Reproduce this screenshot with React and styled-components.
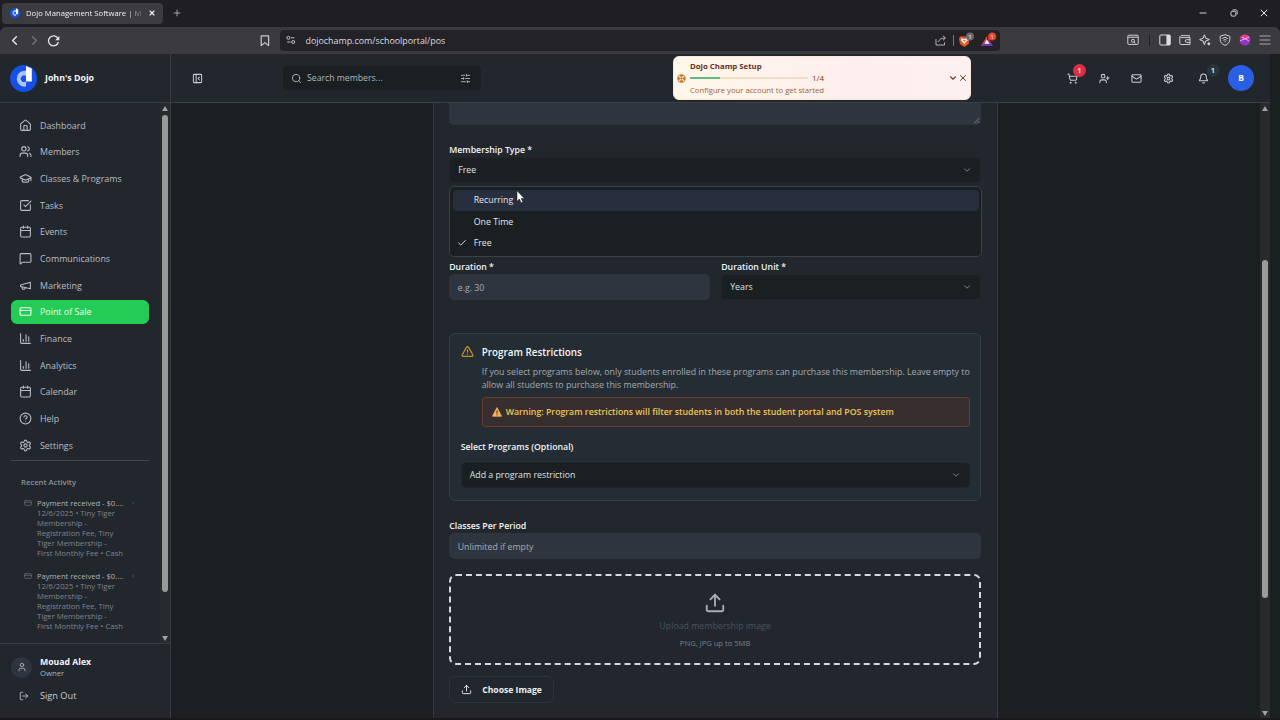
import React from "react";
import styled, { createGlobalStyle, css } from "styled-components";
import {
  Bell,
  Calendar,
  ChartColumn,
  Check,
  ChevronDown,
  ChevronLeft,
  ChevronRight,
  CircleQuestionMark,
  CreditCard,
  GraduationCap,
  House,
  LogOut,
  Mail,
  MessageSquare,
  PanelLeftClose,
  Plus,
  Search,
  Settings,
  ShoppingCart,
  SlidersHorizontal,
  SquareCheckBig,
  TriangleAlert,
  Upload,
  User,
  UserPlus,
  Users,
  X,
} from "lucide-react";

function MegaphoneIcon({ size, strokeWidth }) {
  return (
    <svg
      width={size}
      height={size}
      viewBox="0 0 24 24"
      fill="none"
      stroke="currentColor"
      strokeWidth={strokeWidth}
      strokeLinecap="round"
      strokeLinejoin="round"
    >
      <path d="m3 11 18-5v12L3 14v-3z" />
      <path d="M11.6 16.8a3 3 0 1 1-5.8-1.6" />
    </svg>
  );
}

const navItems = [
  { label: "Dashboard", icon: House },
  { label: "Members", icon: Users },
  { label: "Classes & Programs", icon: GraduationCap },
  { label: "Tasks", icon: SquareCheckBig },
  { label: "Events", icon: Calendar },
  { label: "Communications", icon: MessageSquare },
  { label: "Marketing", icon: MegaphoneIcon },
  { label: "Point of Sale", icon: CreditCard, active: true },
  { label: "Finance", icon: ChartColumn },
  { label: "Analytics", icon: ChartColumn },
  { label: "Calendar", icon: Calendar },
  { label: "Help", icon: CircleQuestionMark },
  { label: "Settings", icon: Settings },
];

const activities = [
  {
    id: 1,
    title: "Payment received - $0....",
    lines: ["12/6/2025 • Tiny Tiger", "Membership -", "Registration Fee, Tiny", "Tiger Membership -", "First Monthly Fee • Cash"],
  },
  {
    id: 2,
    title: "Payment received - $0....",
    lines: ["12/6/2025 • Tiny Tiger", "Membership -", "Registration Fee, Tiny", "Tiger Membership -", "First Monthly Fee • Cash"],
  },
];

const membershipTypes = ["Recurring", "One Time", "Free"];

function DojoLogo({ size }) {
  return (
    <svg width={size} height={size} viewBox="0 0 27 27">
      <circle cx="13.5" cy="13.5" r="13.5" fill="#1551e6" />
      <path d="M16 5.8a8 8 0 1 0 0 15.8v-5.4a3.2 3.2 0 1 1 0-5z" fill="#a9c3fb" />
      <path d="M16 1l5.8 2.6V16.6H16z" fill="#fff" />
    </svg>
  );
}

function BrowserChrome() {
  return (
    <>
      <TabStrip>
        <Tab>
          <DojoLogo size={10} />
          <TabTitle>Dojo Management Software | M</TabTitle>
          <X size={8} strokeWidth={3.4} />
        </Tab>
        <Plus size={10} strokeWidth={2} color="#b9b8bc" />
        <WindowButtons>
          <svg width="8" height="8" viewBox="0 0 8 8">
            <path d="M.5 4h7" stroke="#d0cfd2" />
          </svg>
          <svg width="8" height="8" viewBox="0 0 8 8" fill="none" stroke="#d0cfd2">
            <rect x="1" y="2.3" width="4.8" height="4.8" rx="1" />
            <path d="M2.6.9h3.2a1.4 1.4 0 0 1 1.4 1.4v3.2" />
          </svg>
          <svg width="8" height="8" viewBox="0 0 8 8">
            <path d="M.8.8l6.4 6.4M7.2.8L.8 7.2" stroke="#e4e3e6" />
          </svg>
        </WindowButtons>
      </TabStrip>
      <Toolbar>
        <NavButtons>
          <ChevronLeft size={15} strokeWidth={2.2} />
          <ChevronRight size={15} strokeWidth={2} color="#77757b" />
          <svg width="13" height="13" viewBox="0 0 13 13">
            <path d="M11 4.6A5 5 0 1 0 11.4 8" fill="none" stroke="#e6e5e8" strokeWidth="1.3" />
            <path d="M12.3 2v4.2H8.2z" fill="#e6e5e8" />
          </svg>
        </NavButtons>
        <BookmarkIcon width="10" height="13" viewBox="0 0 10 13">
          <path d="M1.2 1.8h7.4v9.8L4.9 8.6l-3.7 3z" fill="none" stroke="#c9c8cc" strokeWidth="1.2" strokeLinejoin="round" />
        </BookmarkIcon>
        <UrlBar>
          <svg width="10" height="10" viewBox="0 0 10 10" fill="none" stroke="#c4c3c7">
            <circle cx="2.4" cy="2.8" r="1.5" />
            <path d="M5 2.8h3.4M1.2 7h3.4" />
            <circle cx="7.2" cy="7" r="1.5" />
          </svg>
          <Url>dojochamp.com/schoolportal/pos</Url>
          <ShareIcon width="12" height="11" viewBox="0 0 12 11" fill="none" stroke="#b4b3b8">
            <path d="M1 4v6h8.5V7.5M3.5 7C4 4.5 6 3 10 3M8 .8L10.5 3 8 5.3" />
          </ShareIcon>
          <BarDivider $light />
          <svg width="18" height="17" viewBox="0 0 18 17">
            <path d="M3 4.5h8.5l1.2 2.2-1 5.2L7.3 15l-4.3-3.1-1-5.2z" fill="#e4562c" />
            <path d="M4.4 6.2l2.9.8 2.9-.8.3 2.2-1.8 1.8-1.4 2-1.4-2-1.8-1.8z" fill="#fff" />
            <path d="M6 8l1.3 2L8.6 8z" fill="#e4562c" />
            <circle cx="13" cy="4.6" r="4" fill="#67696e" />
            <text x="13" y="7" textAnchor="middle" fontSize="6" fill="#fff">1</text>
          </svg>
          <svg width="18" height="17" viewBox="0 0 18 17">
            <path d="M7 4L1 14h6l0-4z" fill="#e8482c" />
            <path d="M1 14h12l-2.4-3.4H5z" fill="#6b34b8" />
            <path d="M7 4l6 10-4-2.5z" fill="#a32a7a" />
            <path d="M7 7.6l2.6 4.2H4.4z" fill="#fff" />
            <circle cx="12.2" cy="4.6" r="4" fill="#e8432e" />
            <text x="12.2" y="7" textAnchor="middle" fontSize="6" fill="#fff">1</text>
          </svg>
        </UrlBar>
        <BrowserTools>
          <svg width="12" height="12" viewBox="0 0 12 12" fill="none" stroke="#cfced2">
            <rect x=".8" y="1.2" width="10.4" height="9.2" rx="1" />
            <path d="M.8 3.2h10.4M7 8l1.4 1.4" />
            <circle cx="6" cy="6.8" r="1.5" />
          </svg>
          <BarDivider />
          <svg width="12" height="12" viewBox="0 0 12 12">
            <rect x=".8" y="1" width="10.4" height="10" rx="1" fill="none" stroke="#dddce0" />
            <path d="M7.4 1h3.8v10H7.4z" fill="#dddce0" />
          </svg>
          <svg width="12" height="12" viewBox="0 0 12 12" fill="none" stroke="#cfced2">
            <path d="M10.3 3.6V1.6H2a1.2 1.2 0 0 0 0 2h9v6.9H1.8A1.1 1.1 0 0 1 .8 9.4V2.6" />
            <path d="M11 5.7H7.6a1.3 1.3 0 0 0 0 2.7H11" />
          </svg>
          <svg width="12" height="12" viewBox="0 0 12 12" fill="none" stroke="#dddce0">
            <path d="M5.4.8l1.2 3.4L10.4 5.6 6.6 7 5.4 10.6 4.1 7 .6 5.6l3.5-1.4z" />
            <circle cx="9.8" cy="9.8" r="1" fill="#dddce0" />
          </svg>
          <svg width="12" height="12" viewBox="0 0 12 12" fill="none" stroke="#cfced2">
            <path d="M6 .7l4.8 1.5v3.5c0 2.6-2 4.6-4.8 5.7C3.2 10.3 1.2 8.3 1.2 5.7V2.2z" />
            <path d="M3.2 4.6a4 4 0 0 1 5.6 0M4.4 6.3a2.3 2.3 0 0 1 3.2 0M6 7.2v1" />
          </svg>
          <svg width="12" height="12" viewBox="0 0 12 12">
            <circle cx="6" cy="6" r="5.5" fill="#8f35c4" />
            <path d="M1 3.8A5.5 5.5 0 0 1 11 3.8L6 6z" fill="#e0408c" />
            <path d="M1 6.8l9-3.6M3 3l7 4" stroke="#f3b6ea" strokeWidth=".9" />
          </svg>
          <svg width="12" height="12" viewBox="0 0 12 12">
            <path d="M.5 2h11M.5 6h11M.5 10h11" stroke="#a5a3a8" strokeWidth="1.2" />
          </svg>
        </BrowserTools>
      </Toolbar>
    </>
  );
}

function Sidebar() {
  return (
    <SidebarColumn>
      <SidebarScroll>
        <SidebarContent>
          <Nav>
            {navItems.map(({ label, icon: Icon, active }) => (
              <NavItem key={label} $active={active}>
                <Icon size={13} strokeWidth={2} />
                {label}
              </NavItem>
            ))}
          </Nav>
          <RecentTitle>Recent Activity</RecentTitle>
          {activities.map((item) => (
            <Activity key={item.id}>
              <CreditCard size={8} strokeWidth={2} color="#6f757d" />
              <div>
                <ActivityTitle>{item.title}</ActivityTitle>
                {item.lines.map((line) => (
                  <ActivityLine key={line}>{line}</ActivityLine>
                ))}
              </div>
              <Dot>›</Dot>
            </Activity>
          ))}
        </SidebarContent>
        <ScrollTrack>
          <Arrow $up />
          <Thumb $height={477} $color="#979b97" />
          <Arrow />
        </ScrollTrack>
      </SidebarScroll>
      <Account>
        <AccountRow>
          <AccountAvatar>
            <User size={10} strokeWidth={2} />
          </AccountAvatar>
          <div>
            <AccountName>Mouad Alex</AccountName>
            <AccountRole>Owner</AccountRole>
          </div>
        </AccountRow>
        <SignOut>
          <LogOut size={10} strokeWidth={2} />
          Sign Out
        </SignOut>
      </Account>
    </SidebarColumn>
  );
}

function Header() {
  return (
    <TopBar>
      <Brand>
        <DojoLogo size={27} />
        John's Dojo
      </Brand>
      <PanelLeftClose size={11} strokeWidth={2.2} />
      <SearchBox>
        <Search size={11} strokeWidth={2} />
        <span>Search members...</span>
        <SlidersHorizontal size={11} strokeWidth={2} />
      </SearchBox>
      <SetupCard>
        <svg width="9" height="9" viewBox="0 0 9 9">
          <circle cx="4.5" cy="4.5" r="4.2" fill="#c9762f" />
          <path d="M2 2l5 5M7 2L2 7" stroke="#fff3df" strokeWidth="1.1" />
          <circle cx="4.5" cy="4.5" r="1.1" fill="#c9762f" />
        </svg>
        <div>
          <SetupTitle>Dojo Champ Setup</SetupTitle>
          <SetupProgress>
            <ProgressTrack>
              <ProgressFill />
            </ProgressTrack>
            1/4
          </SetupProgress>
          <SetupText>Configure your account to get started</SetupText>
        </div>
        <SetupActions>
          <ChevronDown size={10} strokeWidth={2.6} />
          <X size={10} strokeWidth={2.4} />
        </SetupActions>
      </SetupCard>
      <HeaderActions>
        <IconSlot>
          <ShoppingCart size={11} strokeWidth={2.2} />
          <Badge $color="#dc2f43">1</Badge>
        </IconSlot>
        <IconSlot>
          <UserPlus size={11} strokeWidth={2.2} />
        </IconSlot>
        <IconSlot>
          <Mail size={11} strokeWidth={2.2} />
        </IconSlot>
        <IconSlot>
          <Settings size={11} strokeWidth={2.2} />
        </IconSlot>
        <IconSlot $last>
          <Bell size={11} strokeWidth={2.2} />
          <Badge $color="#28353b" $right>1</Badge>
        </IconSlot>
      </HeaderActions>
      <Avatar>B</Avatar>
    </TopBar>
  );
}

function MembershipForm() {
  return (
    <FormCard>
      <TextArea>
        <svg width="6" height="6" viewBox="0 0 6 6">
          <path d="M0 5.5L5.5 0M3 5.5L5.5 3" stroke="#8c9198" strokeWidth=".8" />
        </svg>
      </TextArea>

      <Label $top={18}>Membership Type *</Label>
      <SelectWrap>
        <SelectBox>
          Free
          <ChevronDown size={10} strokeWidth={2} />
        </SelectBox>
        <Menu>
          {membershipTypes.map((type, index) => (
            <MenuItem key={type} $highlighted={index === 0}>
              <CheckSlot>{type === "Free" && <Check size={10} strokeWidth={2.2} />}</CheckSlot>
              {type}
            </MenuItem>
          ))}
          <Cursor width="9" height="14" viewBox="0 0 9 14">
            <path d="M1 .8v10.4l2.4-2.2 1.7 3.8 1.7-.8-1.7-3.6h3.2z" fill="#fff" stroke="#222" strokeWidth=".5" />
          </Cursor>
        </Menu>
      </SelectWrap>

      <DurationRow>
        <div>
          <Label>Duration *</Label>
          <Input>e.g. 30</Input>
        </div>
        <div>
          <Label>Duration Unit *</Label>
          <SelectBox>
            Years
            <ChevronDown size={10} strokeWidth={2} />
          </SelectBox>
        </div>
      </DurationRow>

      <Restrictions>
        <RestrictionsHead>
          <TriangleAlert size={13} strokeWidth={2.2} color="#c4952b" />
          <div>
            <RestrictionsTitle>Program Restrictions</RestrictionsTitle>
            <RestrictionsText>
              If you select programs below, only students enrolled in these programs can purchase this membership. Leave empty to
              <br />
              allow all students to purchase this membership.
            </RestrictionsText>
            <Warning>
              <svg width="10" height="10" viewBox="0 0 10 10">
                <path d="M5 .6l4.5 8.6H.5z" fill="#f2b35a" stroke="#f2b35a" strokeWidth=".8" strokeLinejoin="round" />
                <path d="M5 3.4v3M5 7.3v1" stroke="#45302c" strokeWidth="1.1" />
              </svg>
              Warning: Program restrictions will filter students in both the student portal and POS system
            </Warning>
          </div>
        </RestrictionsHead>
        <Label $top={13}>Select Programs (Optional)</Label>
        <ProgramSelect>
          Add a program restriction
          <ChevronDown size={10} strokeWidth={2} />
        </ProgramSelect>
      </Restrictions>

      <Label $top={18}>Classes Per Period</Label>
      <Input>Unlimited if empty</Input>

      <DropZone>
        <Upload size={22} strokeWidth={2} color="#a9adb5" />
        <DropTitle>Upload membership image</DropTitle>
        <DropHint>PNG, JPG up to 5MB</DropHint>
      </DropZone>
      <ChooseButton>
        <Upload size={11} strokeWidth={2} />
        Choose Image
      </ChooseButton>
    </FormCard>
  );
}

export default function App() {
  return (
    <>
      <GlobalStyle />
      <Window>
        <BrowserChrome />
        <Page>
          <Header />
          <Body>
            <Sidebar />
            <Main>
              <MembershipForm />
            </Main>
            <ScrollTrack $page>
              <Arrow $up />
              <Thumb $height={338} $offset={145} $color="#9b9b9b" />
              <Arrow />
            </ScrollTrack>
          </Body>
        </Page>
      </Window>
    </>
  );
}

const GlobalStyle = createGlobalStyle`
  * {
    box-sizing: border-box;
  }
  body {
    margin: 0;
    background: #1a1f22;
    font-family: "Open Sans", "Noto Sans", sans-serif;
    font-size: 8.8px;
    color: #e8eaed;
  }
  svg {
    flex-shrink: 0;
    display: block;
  }
`;

const Window = styled.div`
  width: 1280px;
  height: 720px;
  overflow: hidden;
  display: flex;
  flex-direction: column;
  border-bottom: 2px solid #1c171b;
`;

const TabStrip = styled.div`
  height: 27px;
  flex-shrink: 0;
  display: flex;
  align-items: center;
  gap: 9px;
  padding-left: 2px;
  padding-bottom: 1px;
  background: #1f1e23;
`;

const Tab = styled.div`
  width: 161px;
  height: 21px;
  display: flex;
  align-items: center;
  padding: 0 7px 0 8px;
  border-radius: 4px;
  background: #3c3b40;
  color: #f0eff2;
`;

const TabTitle = styled.div`
  width: 116px;
  margin: 0 7px 0 6px;
  white-space: nowrap;
  font-size: 7.7px;
  font-weight: 500;
  mask-image: linear-gradient(90deg, #000 88%, rgba(0, 0, 0, 0.25));
`;

const WindowButtons = styled.div`
  display: flex;
  gap: 22.5px;
  margin-left: auto;
  margin-right: 12px;
`;

const Toolbar = styled.div`
  height: 27px;
  flex-shrink: 0;
  display: flex;
  align-items: center;
  padding-bottom: 1px;
  background: #3b3a3f;
  border-radius: 6px 6px 0 0;
`;

const NavButtons = styled.div`
  width: 260px;
  display: flex;
  align-items: center;
  gap: 5px;
  padding-left: 7px;
`;

const BookmarkIcon = styled.svg`
  margin-right: 10px;
`;

const UrlBar = styled.div`
  width: 720px;
  height: 21px;
  display: flex;
  align-items: center;
  padding: 0 2px 0 6px;
  border-radius: 4px;
  background: #232227;
`;

const Url = styled.div`
  margin-left: 9.5px;
  font-size: 8.9px;
  color: #dddce0;
`;

const ShareIcon = styled.svg`
  margin-left: auto;
  margin-right: 6px;
`;

const BarDivider = styled.div`
  width: 1px;
  height: 11px;
  margin-right: ${({ $light }) => ($light ? "3px" : "0")};
  background: ${({ $light }) => ($light ? "#77767b" : "#1f1e23")};

  & ~ svg + svg {
    margin-left: ${({ $light }) => ($light ? "5px" : "0")};
  }
`;

const BrowserTools = styled.div`
  display: flex;
  align-items: center;
  gap: 8px;
  margin-left: auto;
  margin-right: 9px;

  ${BarDivider} {
    margin: 0 1px 0 2px;
  }
`;

const Page = styled.div`
  flex: 1;
  min-height: 0;
  display: flex;
  flex-direction: column;
  background: #1a1f22;
`;

const TopBar = styled.header`
  width: 1270px;
  height: 49px;
  flex-shrink: 0;
  display: flex;
  align-items: center;
  background: #22272e;
  border-bottom: 1px solid #3a4047;
  color: #c9cdd3;
`;

const Brand = styled.div`
  width: 171px;
  height: 100%;
  margin-right: 21px;
  padding-left: 10px;
  display: flex;
  align-items: center;
  gap: 8px;
  border-right: 1px solid #383d44;
  font-size: 8.8px;
  font-weight: 700;
  color: #f5f6f8;
`;

const SearchBox = styled.div`
  width: 200px;
  height: 26px;
  margin-left: 79px;
  display: flex;
  align-items: center;
  gap: 5px;
  padding: 0 10px 0 8px;
  border: 1px solid #22282c;
  border-radius: 5px;
  background: #1a1f22;
  font-size: 8.7px;
  color: #b2b7bd;

  span {
    flex: 1;
  }
`;

const SetupCard = styled.div`
  position: relative;
  z-index: 2;
  width: 298px;
  height: 44px;
  margin-left: 191px;
  display: flex;
  align-items: center;
  gap: 4px;
  padding: 0 2px 0 3px;
  border: 1px solid #fbe8d5;
  border-radius: 6px;
  background: linear-gradient(90deg, #fff7e9, #fdefee 60%, #fdf0f0);
  color: #7c3a22;
`;

const SetupTitle = styled.div`
  font-size: 7.8px;
  font-weight: 700;
  line-height: 12px;
  color: #6b2c20;
`;

const SetupProgress = styled.div`
  display: flex;
  align-items: center;
  gap: 4px;
  font-size: 8px;
  font-weight: 500;
  line-height: 12px;
`;

const ProgressTrack = styled.div`
  width: 118px;
  height: 2px;
  background: #f0dfc3;
`;

const ProgressFill = styled.div`
  width: 25%;
  height: 100%;
  background: #5fbb80;
`;

const SetupText = styled.div`
  font-size: 7.7px;
  line-height: 12px;
  color: #a0603c;
`;

const SetupActions = styled.div`
  margin-left: auto;
  display: flex;
  align-items: center;
`;

const HeaderActions = styled.div`
  display: flex;
  gap: 21px;
  margin-left: auto;
`;

const IconSlot = styled.div`
  position: relative;
  margin-left: ${({ $last }) => ($last ? "3px" : "0")};
`;

const Badge = styled.span`
  position: absolute;
  top: -9px;
  left: ${({ $right }) => ($right ? "8.5px" : "6px")};
  width: 13px;
  height: 13px;
  border-radius: 50%;
  background: ${({ $color }) => $color};
  color: #fff;
  font-size: 7.5px;
  font-weight: 600;
  line-height: 13px;
  text-align: center;
`;

const Avatar = styled.div`
  width: 26px;
  height: 26px;
  margin-left: 19px;
  margin-right: 16px;
  border-radius: 50%;
  background: #2a5ee3;
  color: #fff;
  font-size: 8.5px;
  font-weight: 700;
  line-height: 26px;
  text-align: center;
`;

const Body = styled.div`
  flex: 1;
  min-height: 0;
  display: flex;
  padding-right: 10px;
`;

const SidebarColumn = styled.aside`
  width: 171px;
  display: flex;
  flex-direction: column;
  background: #22272e;
  border-right: 1px solid #383d44;
`;

const SidebarScroll = styled.div`
  height: 540px;
  display: flex;
`;

const SidebarContent = styled.div`
  width: 160px;
  overflow: hidden;
  padding: 10.2px 11px 0;
`;

const Nav = styled.nav`
  display: flex;
  flex-direction: column;
  gap: 2.43px;
  padding-bottom: 3px;
  border-bottom: 1px solid #41464d;
`;

const NavItem = styled.a`
  height: 24.24px;
  display: flex;
  align-items: center;
  gap: 8px;
  padding-left: 8px;
  border-radius: 6px;
  font-size: 8.9px;
  color: #b9bdc3;

  ${({ $active }) =>
    $active &&
    css`
      background: #24cc55;
      color: #ecfff1;
    `}
`;

const RecentTitle = styled.div`
  margin: 15px 0 9.8px 10px;
  font-size: 7.7px;
  font-weight: 600;
  line-height: 12px;
  color: #8b9097;
`;

const Activity = styled.div`
  height: 73.2px;
  display: flex;
  gap: 5px;
  padding-left: 13px;
  line-height: 10px;

  > svg {
    margin-top: 1px;
  }
`;

const ActivityTitle = styled.div`
  width: 89px;
  font-size: 7.6px;
  font-weight: 500;
  color: #adb1b7;
  white-space: nowrap;
`;

const ActivityLine = styled.div`
  font-size: 7.7px;
  color: #7f848b;
  white-space: nowrap;
`;

const Dot = styled.span`
  margin-left: 1px;
  font-size: 7px;
  color: #62676e;
`;

const ScrollTrack = styled.div`
  width: 10px;
  display: flex;
  flex-direction: column;
  align-items: center;
  padding: 3px 0 2px;
  background: ${({ $page }) => ($page ? "#2a2a2c" : "#282b2e")};
`;

const Arrow = styled.div`
  width: 0;
  height: 0;
  margin-top: ${({ $up }) => ($up ? "0" : "auto")};
  border: 3px solid transparent;
  border-top-width: ${({ $up }) => ($up ? "0" : "5px")};
  border-bottom-width: ${({ $up }) => ($up ? "5px" : "0")};
  border-top-color: ${({ $up }) => ($up ? "transparent" : "#9fa2a2")};
  border-bottom-color: ${({ $up }) => ($up ? "#9fa2a2" : "transparent")};
`;

const Thumb = styled.div`
  width: 6px;
  height: ${({ $height }) => $height}px;
  margin-top: ${({ $offset }) => 4 + ($offset || 0)}px;
  border-radius: 3px;
  background: ${({ $color }) => $color};
`;

const Account = styled.div`
  flex: 1;
  padding: 11px 11px 0;
  border-top: 1px solid #383d44;
`;

const AccountRow = styled.div`
  display: flex;
  align-items: center;
  gap: 8px;
`;

const AccountAvatar = styled.div`
  width: 21px;
  height: 21px;
  display: grid;
  place-items: center;
  border-radius: 50%;
  background: #2e3540;
  color: #b9bdc3;
`;

const AccountName = styled.div`
  padding-top: 1px;
  font-size: 8.7px;
  font-weight: 700;
  line-height: 12px;
  color: #f3f4f6;
`;

const AccountRole = styled.div`
  font-size: 7.7px;
  line-height: 11px;
  color: #aeb3b9;
`;

const SignOut = styled.div`
  display: flex;
  align-items: center;
  gap: 11px;
  margin-top: 11px;
  padding-left: 8px;
  font-size: 9.2px;
  font-weight: 500;
  line-height: 12px;
  color: #c9cdd2;
`;

const Main = styled.main`
  flex: 1;
  display: flex;
  justify-content: center;
  overflow: hidden;
`;

const FormCard = styled.section`
  width: 565px;
  padding: 0 16px 0 15.2px;
  background: #22272e;
  border: solid #363c42;
  border-width: 0 1px;
`;

const field = css`
  height: 26px;
  display: flex;
  align-items: center;
  justify-content: space-between;
  padding: 0 8px;
  border-radius: 5px;
  font-size: 8.8px;
`;

const TextArea = styled.div`
  height: 22px;
  display: flex;
  align-items: flex-end;
  justify-content: flex-end;
  padding: 1px;
  border-radius: 0 0 5px 5px;
  background: #2f353e;
`;

const Label = styled.div`
  margin-top: ${({ $top }) => $top || 0}px;
  padding-top: 1px;
  font-size: 8.75px;
  font-weight: 600;
  line-height: 13px;
  color: #f2f4f6;
`;

const Input = styled.div`
  ${field}
  padding: 1px 8.5px 0;
  background: #2f353e;
  color: #a5abb3;
`;

const SelectBox = styled.div`
  ${field}
  padding-right: 8px;
  border: 1px solid #20262a;
  background: #1a1f22;
  color: #dfe2e5;

  svg {
    color: #8f959b;
  }
`;

const ProgramSelect = styled(SelectBox)`
  margin-top: 8px;
`;

const SelectWrap = styled.div`
  position: relative;
`;

const Menu = styled.div`
  position: absolute;
  z-index: 1;
  top: 29px;
  left: 0;
  width: 533px;
  height: 71px;
  padding: 2.5px;
  border: 1px solid #3b4145;
  border-radius: 5px;
  background: #1a1f22;
`;

const MenuItem = styled.div`
  height: 21.4px;
  display: flex;
  align-items: center;
  padding-left: 4px;
  border-radius: 4px;
  font-size: 8.8px;
  color: #e3e6e9;
  background: ${({ $highlighted }) => ($highlighted ? "#272f3e" : "transparent")};
`;

const CheckSlot = styled.span`
  width: 17px;
`;

const Cursor = styled.svg`
  position: absolute;
  top: 3px;
  left: 66px;
`;

const DurationRow = styled.div`
  display: grid;
  grid-template-columns: 261px 1fr;
  gap: 11px;
  margin-top: 77px;
`;

const Restrictions = styled.div`
  height: 168px;
  margin-top: 33px;
  padding: 11px 10.5px 0;
  border: 1px solid #343f46;
  border-radius: 6px;
  background: #252d34;
`;

const RestrictionsHead = styled.div`
  display: flex;
  gap: 8px;

  > div {
    flex: 1;
  }
`;

const RestrictionsTitle = styled.div`
  font-size: 9.9px;
  font-weight: 600;
  line-height: 14px;
  color: #f4f6f8;
`;

const RestrictionsText = styled.p`
  margin: 7px 0 4.6px;
  font-size: 8.82px;
  line-height: 13.3px;
  color: #a3a9b0;
  white-space: nowrap;
`;

const Warning = styled.div`
  height: 30px;
  display: flex;
  align-items: center;
  gap: 4px;
  padding-left: 9px;
  border: 1px solid #6b3a2a;
  border-radius: 3px;
  background: #372e2f;
  font-size: 8.77px;
  font-weight: 600;
  color: #ecc853;
`;

const DropZone = styled.div`
  height: 91px;
  margin-top: 15px;
  display: flex;
  flex-direction: column;
  align-items: center;
  padding-top: 16px;
  border: 2px dashed #d5d8dc;
  border-radius: 7px;
`;

const DropTitle = styled.div`
  margin-top: 5px;
  font-size: 8.8px;
  line-height: 14px;
  color: #4c525a;
`;

const DropHint = styled.div`
  margin-top: 4px;
  font-size: 7.6px;
  line-height: 12px;
  color: #7b8088;
`;

const ChooseButton = styled.button`
  width: 105px;
  height: 27px;
  display: flex;
  align-items: center;
  gap: 10px;
  margin-top: 11px;
  padding: 0 11px;
  border: 1px solid #2d333a;
  border-radius: 6px;
  background: #22272e;
  color: #eef0f2;
  font-family: inherit;
  font-size: 8.6px;
  font-weight: 700;
  white-space: nowrap;
`;
